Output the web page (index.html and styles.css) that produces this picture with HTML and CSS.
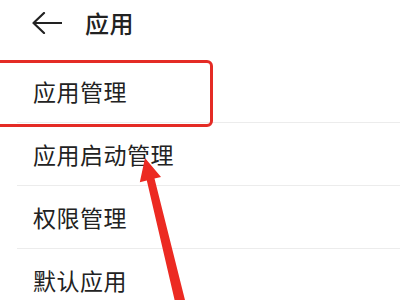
FILE: index.html
```html
<!DOCTYPE html>
<html lang="zh-CN">
<head>
<meta charset="utf-8">
<title>应用</title>
<link rel="stylesheet" href="styles.css">
</head>
<body>
<div class="screen">
  <header class="topbar">
    <svg class="back" width="30" height="22" viewBox="0 0 30 22" aria-hidden="true">
      <path d="M12 1 L1.5 11 L12 21 M1.5 11 H29.5" fill="none" stroke="#222" stroke-width="2.2" stroke-linecap="round" stroke-linejoin="round"/>
    </svg>
    <h1 class="title">应用</h1>
  </header>
  <ul class="list">
    <li class="row">应用管理</li>
    <li class="row">应用启动管理</li>
    <li class="row">权限管理</li>
    <li class="row">默认应用</li>
  </ul>
  <div class="highlight"></div>
  <svg class="pointer" width="400" height="300" viewBox="0 0 400 300" aria-hidden="true">
    <polygon points="145,158 161,177 154.5,178.6 186,304 176,306 146.8,180.4 139.8,182.2" fill="#ec2a22"/>
  </svg>
</div>
</body>
</html>
```

FILE: styles.css
```css
html, body {
  margin: 0;
  padding: 0;
  background: #ffffff;
}

.screen {
  position: relative;
  width: 400px;
  height: 300px;
  overflow: hidden;
  font-family: "Noto Sans CJK SC", "Noto Sans", sans-serif;
  color: #222222;
}

.topbar {
  display: flex;
  align-items: center;
  height: 45px;
  margin-bottom: 15px;
  padding-left: 32px;
}

.back {
  display: block;
  margin-top: 1px;
}

.title {
  margin: 0 0 0 23px;
  font-size: 24px;
  font-weight: 500;
  line-height: 45px;
  letter-spacing: 0.5px;
}

.list {
  list-style: none;
  margin: 0;
  padding: 0;
}

.row {
  height: 62px;
  line-height: 62px;
  margin-left: 17px;
  padding-left: 16px;
  border-bottom: 1px solid #ececec;
  font-size: 23px;
  letter-spacing: 0.5px;
}

.highlight {
  position: absolute;
  left: -6px;
  top: 60px;
  width: 213px;
  height: 61px;
  border: 3px solid #e42b25;
  border-radius: 6px;
}

.pointer {
  position: absolute;
  left: 0;
  top: 0;
}
```
